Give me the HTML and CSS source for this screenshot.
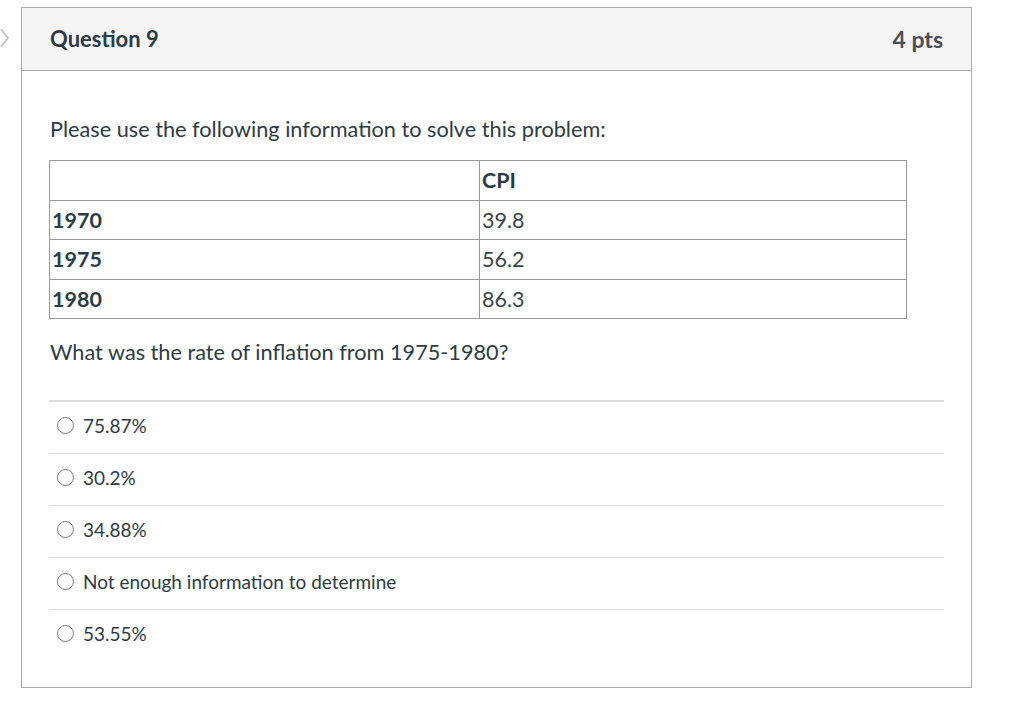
FILE: index.html
```html
<!DOCTYPE html>
<html>
<head>
<meta charset="utf-8">
<link rel="stylesheet" href="styles.css">
</head>
<body>
<div class="page">
  <div class="nav">
    <svg class="chev" width="10" height="20" viewBox="0 0 10 20"><path d="M1.5 2 L8 10 L1.5 18" fill="none" stroke="#b4c2d0" stroke-width="1.8" stroke-linecap="round" stroke-linejoin="round"/></svg>
  </div>
  <div class="card">
    <div class="card-head">
      <h2 class="q-title">Question 9</h2>
      <div class="q-pts">4 pts</div>
    </div>
    <div class="card-body">
      <p class="q-text first">Please use the following information to solve this problem:</p>
      <table class="data">
        <tr><td class="c1"></td><td class="c2 bold">CPI</td></tr>
        <tr><td class="c1 bold">1970</td><td class="c2">39.8</td></tr>
        <tr><td class="c1 bold">1975</td><td class="c2">56.2</td></tr>
        <tr><td class="c1 bold">1980</td><td class="c2">86.3</td></tr>
      </table>
      <p class="q-text second">What was the rate of inflation from 1975-1980?</p>
      <div class="answers">
        <label class="answer"><span class="radio"></span><span>75.87%</span></label>
        <label class="answer"><span class="radio"></span><span>30.2%</span></label>
        <label class="answer"><span class="radio"></span><span>34.88%</span></label>
        <label class="answer"><span class="radio"></span><span>Not enough information to determine</span></label>
        <label class="answer"><span class="radio"></span><span>53.55%</span></label>
      </div>
    </div>
  </div>
</div>
</body>
</html>
```
FILE: styles.css
```css
html, body {
  margin: 0;
  padding: 0;
  background: #ffffff;
}
body {
  font-family: Lato, "Liberation Sans", sans-serif;
  color: #2d3b45;
}
.page {
  display: flex;
  align-items: flex-start;
  padding-top: 7px;
}
.nav {
  width: 21px;
  padding-top: 21px;
}
.chev {
  display: block;
}
.card {
  width: 949px;
  border: 1px solid #ababab;
  height: 679px;
}
.card-head {
  height: 62px;
  background: #f5f5f5;
  border-bottom: 1px solid #ababab;
  display: flex;
  align-items: center;
  justify-content: space-between;
  padding: 0 28px;
}
.q-title {
  margin: 0;
  font-size: 22px;
  font-weight: 700;
  padding-bottom: 1px;
}
.q-pts {
  font-size: 23px;
  font-weight: 700;
  color: #4a4f53;
}
.card-body {
  padding: 0 27px 0 27px;
}
.q-text {
  margin: 0;
  font-size: 21.7px;
  line-height: 26px;
}
.q-text.first {
  padding-top: 45px;
  padding-left: 1px;
}
.data {
  margin-top: 18px;
  border-collapse: collapse;
  width: 858px;
  font-size: 21.5px;
}
.data td {
  border: 1px solid #9a9a9a;
  height: 38.5px;
  padding: 0 2px;
  vertical-align: middle;
}
.data .c1 {
  width: 425px;
}
.data .c2 {
  color: #3a454d;
}
.data .c2.bold {
  color: #2d3b45;
}
.bold {
  font-weight: 700;
}
.q-text.second {
  margin-top: 20px;
  padding-left: 1px;
}
.answers {
  margin-top: 35px;
  width: 895px;
}
.answer {
  box-sizing: border-box;
  display: flex;
  align-items: center;
  height: 52px;
  padding-bottom: 5px;
  border-top: 1px solid #dcdcdc;
  font-size: 19px;
  gap: 9px;
  padding-left: 8px;
}
.answer:first-child {
  height: 53px;
  border-top: 2px solid #dcdcdc;
}
.radio {
  width: 17px;
  height: 17px;
  border: 1px solid #777;
  border-radius: 50%;
  display: inline-block;
  box-sizing: border-box;
  flex-shrink: 0;
}
```
